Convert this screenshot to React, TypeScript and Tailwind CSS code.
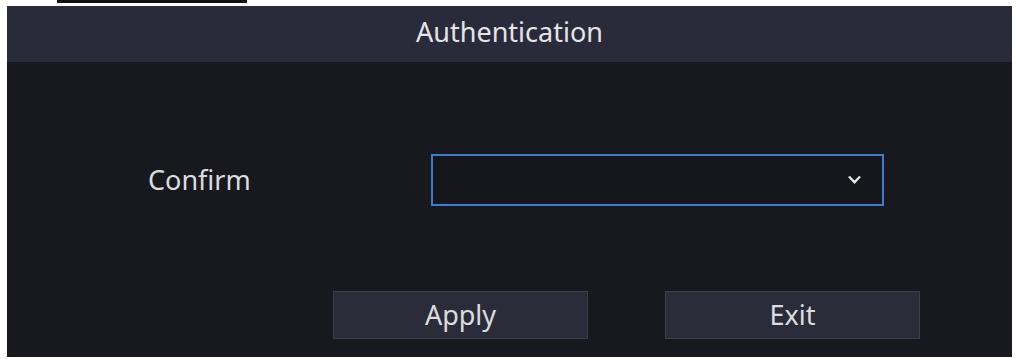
import React from 'react'

const font = { fontFamily: '"Noto Sans", "Open Sans", sans-serif' }

const Chevron = () => (
  <svg width="15" height="11" viewBox="0 0 15 11">
    <path d="M1 2 L7.5 9 L14 2 L12 1 L7.5 5.5 L3 1 Z" fill="#ececec" />
  </svg>
)

export default function App() {
  return (
    <div className="w-[1017px] h-[359px] bg-white overflow-hidden" style={font}>
      <div className="ml-[57px] w-[190px] h-[3px] bg-[#111]" />
      <div className="ml-[7px] mt-[3px] w-[1005px] h-[351px] bg-[#17191f] flex flex-col">
        <div className="h-[56px] bg-[#2a2b3a] flex items-center justify-center text-[27px] text-[#e4e4e6] pb-[3px]">
          Authentication
        </div>
        <div className="flex flex-col">
          <div className="flex items-center mt-[92px]">
            <span className="ml-[141px] w-[283px] text-[27px] text-[#dcdcde]">Confirm</span>
            <div className="w-[453px] h-[52px] border-2 border-[#3b7bd4] bg-[#15171c] flex items-center justify-end pr-[20px]">
              <Chevron />
            </div>
          </div>
          <div className="flex mt-[85px] ml-[326px] gap-[77px]">
            <button className="w-[255px] h-[48px] bg-[#2a2c3a] border border-[#3c3e4c] text-[27px] text-[#dcdcde]">
              Apply
            </button>
            <button className="w-[255px] h-[48px] bg-[#2a2c3a] border border-[#3c3e4c] text-[27px] text-[#dcdcde]">
              Exit
            </button>
          </div>
        </div>
      </div>
    </div>
  )
}
